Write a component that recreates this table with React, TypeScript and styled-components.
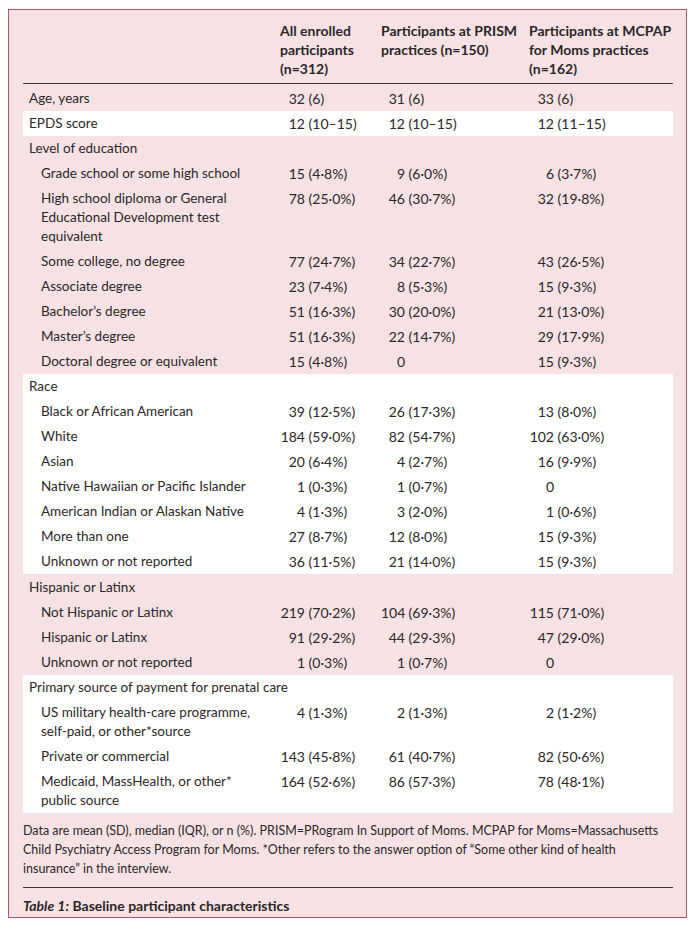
import React from "react";
import styled, { createGlobalStyle } from "styled-components";

const GlobalStyle = createGlobalStyle`
  html, body { margin: 0; padding: 0; background: #ffffff; }
  body { font-family: Lato, "Liberation Sans", sans-serif; color: #2b2728; }
`;

const Page = styled.div`
  padding: 9px 8px 8px 8px;
`;

const Card = styled.div`
  box-sizing: border-box;
  width: 679px;
  border: 1px solid #b5536f;
  background: #f6e2e4;
  padding: 11px 13px 2px 14px;
`;

const Table = styled.table`
  width: 650px;
  border-collapse: collapse;
  table-layout: fixed;
  font-size: 14px;
  line-height: 19px;
`;

const Head = styled.th`
  text-align: left;
  vertical-align: top;
  font-weight: 700;
  padding: 0 0 5px 5px;
  border-bottom: 1px solid #3a3436;
`;

const Section = styled.tbody<{ $white: boolean }>`
  background: ${(p) => (p.$white ? "#ffffff" : "transparent")};
`;

const Label = styled.td<{ $indent: boolean; $top: number }>`
  vertical-align: top;
  white-space: nowrap;
  font-size: 13.5px;
  padding: ${(p) => p.$top}px 0 3px ${(p) => (p.$indent ? "18px" : "6px")};
`;

const Value = styled.td<{ $top: number }>`
  vertical-align: top;
  white-space: nowrap;
  padding: ${(p) => p.$top}px 0 3px 5px;
`;

const Count = styled.span<{ $w: number }>`
  display: inline-block;
  width: ${(p) => p.$w}px;
  text-align: right;
`;

const Note = styled.p`
  margin: 8px 0 0 0;
  font-size: 12.5px;
  line-height: 19px;
`;

const Rule = styled.div`
  margin-top: 9px;
  border-top: 1px solid #3a3436;
`;

const Caption = styled.div`
  padding-top: 8px;
  font-size: 14px;
  line-height: 19px;
  font-weight: 700;
  em { font-style: italic; }
`;

type Val = [string, string];
type Row = { label: string[]; indent?: boolean; values?: Val[] };
type Group = { white: boolean; rows: Row[] };

const groups: Group[] = [
  { white: false, rows: [{ label: ["Age, years"], values: [["32", "(6)"], ["31", "(6)"], ["33", "(6)"]] }] },
  { white: true, rows: [{ label: ["EPDS score"], values: [["12", "(10–15)"], ["12", "(10–15)"], ["12", "(11–15)"]] }] },
  {
    white: false,
    rows: [
      { label: ["Level of education"] },
      { label: ["Grade school or some high school"], indent: true, values: [["15", "(4·8%)"], ["9", "(6·0%)"], ["6", "(3·7%)"]] },
      { label: ["High school diploma or General", "Educational Development test", "equivalent"], indent: true, values: [["78", "(25·0%)"], ["46", "(30·7%)"], ["32", "(19·8%)"]] },
      { label: ["Some college, no degree"], indent: true, values: [["77", "(24·7%)"], ["34", "(22·7%)"], ["43", "(26·5%)"]] },
      { label: ["Associate degree"], indent: true, values: [["23", "(7·4%)"], ["8", "(5·3%)"], ["15", "(9·3%)"]] },
      { label: ["Bachelor’s degree"], indent: true, values: [["51", "(16·3%)"], ["30", "(20·0%)"], ["21", "(13·0%)"]] },
      { label: ["Master’s degree"], indent: true, values: [["51", "(16·3%)"], ["22", "(14·7%)"], ["29", "(17·9%)"]] },
      { label: ["Doctoral degree or equivalent"], indent: true, values: [["15", "(4·8%)"], ["0", ""], ["15", "(9·3%)"]] },
    ],
  },
  {
    white: true,
    rows: [
      { label: ["Race"] },
      { label: ["Black or African American"], indent: true, values: [["39", "(12·5%)"], ["26", "(17·3%)"], ["13", "(8·0%)"]] },
      { label: ["White"], indent: true, values: [["184", "(59·0%)"], ["82", "(54·7%)"], ["102", "(63·0%)"]] },
      { label: ["Asian"], indent: true, values: [["20", "(6·4%)"], ["4", "(2·7%)"], ["16", "(9·9%)"]] },
      { label: ["Native Hawaiian or Pacific Islander"], indent: true, values: [["1", "(0·3%)"], ["1", "(0·7%)"], ["0", ""]] },
      { label: ["American Indian or Alaskan Native"], indent: true, values: [["4", "(1·3%)"], ["3", "(2·0%)"], ["1", "(0·6%)"]] },
      { label: ["More than one"], indent: true, values: [["27", "(8·7%)"], ["12", "(8·0%)"], ["15", "(9·3%)"]] },
      { label: ["Unknown or not reported"], indent: true, values: [["36", "(11·5%)"], ["21", "(14·0%)"], ["15", "(9·3%)"]] },
    ],
  },
  {
    white: false,
    rows: [
      { label: ["Hispanic or Latinx"] },
      { label: ["Not Hispanic or Latinx"], indent: true, values: [["219", "(70·2%)"], ["104", "(69·3%)"], ["115", "(71·0%)"]] },
      { label: ["Hispanic or Latinx"], indent: true, values: [["91", "(29·2%)"], ["44", "(29·3%)"], ["47", "(29·0%)"]] },
      { label: ["Unknown or not reported"], indent: true, values: [["1", "(0·3%)"], ["1", "(0·7%)"], ["0", ""]] },
    ],
  },
  {
    white: true,
    rows: [
      { label: ["Primary source of payment for prenatal care"] },
      { label: ["US military health-care programme,", "self-paid, or other*source"], indent: true, values: [["4", "(1·3%)"], ["2", "(1·3%)"], ["2", "(1·2%)"]] },
      { label: ["Private or commercial"], indent: true, values: [["143", "(45·8%)"], ["61", "(40·7%)"], ["82", "(50·6%)"]] },
      { label: ["Medicaid, MassHealth, or other*", "public source"], indent: true, values: [["164", "(52·6%)"], ["86", "(57·3%)"], ["78", "(48·1%)"]] },
    ],
  },
];

const countWidths = [25, 24, 25];

const Lines: React.FC<{ lines: string[] }> = ({ lines }) => (
  <>
    {lines.map((l, i) => (
      <React.Fragment key={i}>
        {i > 0 && <br />}
        {l}
      </React.Fragment>
    ))}
  </>
);

export default function App() {
  return (
    <Page>
      <GlobalStyle />
      <Card>
        <Table>
          <colgroup>
            <col style={{ width: 252 }} />
            <col style={{ width: 101 }} />
            <col style={{ width: 148 }} />
            <col style={{ width: 149 }} />
          </colgroup>
          <thead>
            <tr>
              <Head />
              <Head>
                <Lines lines={["All enrolled", "participants", "(n=312)"]} />
              </Head>
              <Head>
                <Lines lines={["Participants at PRISM", "practices (n=150)"]} />
              </Head>
              <Head>
                <Lines lines={["Participants at MCPAP", "for Moms practices", "(n=162)"]} />
              </Head>
            </tr>
          </thead>
          {groups.map((g, gi) => (
            <Section key={gi} $white={g.white}>
              {g.rows.map((r, ri) => {
                const top = gi === 0 && ri === 0 ? 5 : gi === 4 && ri === 0 ? 4 : 3;
                return (
                  <tr key={ri}>
                    <Label $indent={!!r.indent} $top={top}>
                      <Lines lines={r.label} />
                    </Label>
                    {[0, 1, 2].map((ci) => {
                      const v = r.values?.[ci];
                      return (
                        <Value key={ci} $top={top}>
                          {v && (
                            <>
                              <Count $w={countWidths[ci]}>{v[0]}</Count>
                              {v[1] ? " " + v[1] : ""}
                            </>
                          )}
                        </Value>
                      );
                    })}
                  </tr>
                );
              })}
            </Section>
          ))}
        </Table>
        <Note>
          Data are mean (SD), median (IQR), or n (%). PRISM=PRogram In Support of Moms. MCPAP for Moms=Massachusetts
          Child Psychiatry Access Program for Moms. *Other refers to the answer option of “Some other kind of health
          insurance” in the interview.
        </Note>
        <Rule />
        <Caption>
          <em>Table 1:</em> Baseline participant characteristics
        </Caption>
      </Card>
    </Page>
  );
}
